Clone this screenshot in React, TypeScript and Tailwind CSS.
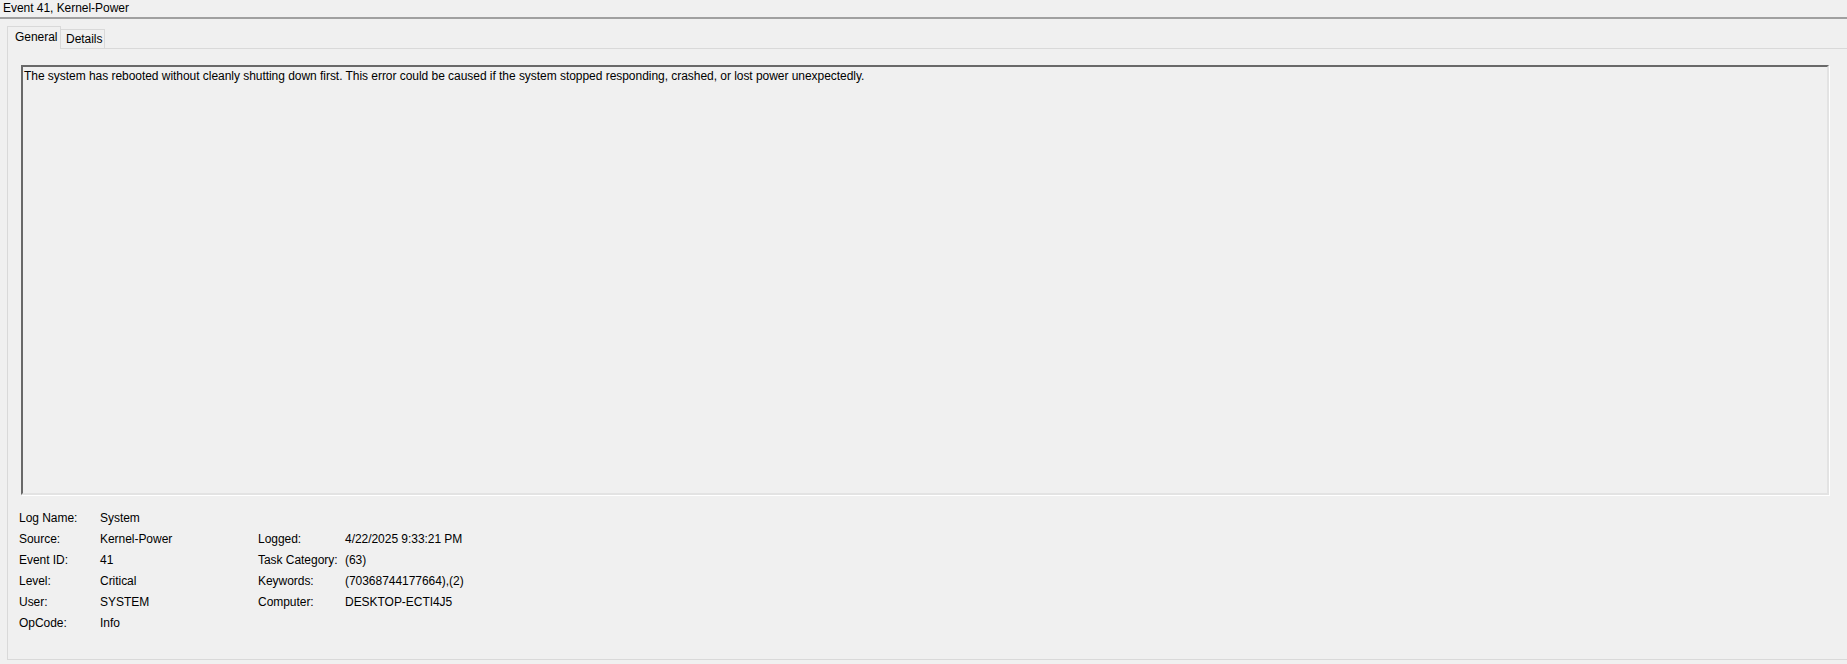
import React from 'react';

const font = { fontFamily: '"Liberation Sans", Arial, sans-serif' };

interface Field {
  label: string;
  value: string;
}

const leftFields: Field[] = [
  { label: 'Log Name:', value: 'System' },
  { label: 'Source:', value: 'Kernel-Power' },
  { label: 'Event ID:', value: '41' },
  { label: 'Level:', value: 'Critical' },
  { label: 'User:', value: 'SYSTEM' },
  { label: 'OpCode:', value: 'Info' },
];

// right column starts one row lower (next to Source)
const rightFields: (Field | null)[] = [
  null,
  { label: 'Logged:', value: '4/22/2025 9:33:21 PM' },
  { label: 'Task Category:', value: '(63)' },
  { label: 'Keywords:', value: '(70368744177664),(2)' },
  { label: 'Computer:', value: 'DESKTOP-ECTI4J5' },
  null,
];

export default function App() {
  return (
    <div
      className="w-[1847px] h-[664px] bg-[#f0f0f0] text-[12px] tracking-[-0.04px] text-black flex flex-col overflow-hidden"
      style={font}
    >
      {/* header */}
      <div className="h-[17px] leading-[16px] pl-[3px]">Event 41, Kernel-Power</div>
      <div className="h-[2px] bg-[#a0a0a0]" />

      {/* tabs */}
      <div className="flex items-end pl-[7px] mt-[7px] h-[22px]">
        <div className="relative z-10 w-[54px] h-[23px] -mb-px bg-[#f0f0f0] border border-b-0 border-[#d9d9d9] pl-[7px] leading-[20px]">
          General
        </div>
        <div className="w-[44px] h-[19px] bg-[#f0f0f0] border-t border-r border-[#d9d9d9] pl-[5px] leading-[18px]">
          Details
        </div>
      </div>

      {/* panel */}
      <div className="ml-[7px] -mr-[10px] h-[612px] border border-[#d9d9d9] bg-[#f0f0f0] pl-[13px] pt-[16px]">
        <div className="w-[1808px] h-[430px] border-2 border-t-[#696969] border-l-[#696969] border-b-[#e3e3e3] border-r-[#e3e3e3] shadow-[1px_1px_0_#ffffff] pl-[1px] pt-[2px] leading-[15px]">
          The system has rebooted without cleanly shutting down first. This error could be caused if the system stopped responding, crashed, or lost power unexpectedly.
        </div>

        <div className="mt-[13px] -ml-[2px] flex">
          <div className="flex flex-col">
            {leftFields.map((f) => (
              <div key={f.label} className="flex h-[21px] leading-[21px]">
                <span className="w-[81px]">{f.label}</span>
                <span className="w-[158px]">{f.value}</span>
              </div>
            ))}
          </div>
          <div className="flex flex-col">
            {rightFields.map((f, i) => (
              <div key={i} className="flex h-[21px] leading-[21px]">
                <span className="w-[87px]">{f ? f.label : ''}</span>
                <span>{f ? f.value : ''}</span>
              </div>
            ))}
          </div>
        </div>
      </div>
    </div>
  );
}
